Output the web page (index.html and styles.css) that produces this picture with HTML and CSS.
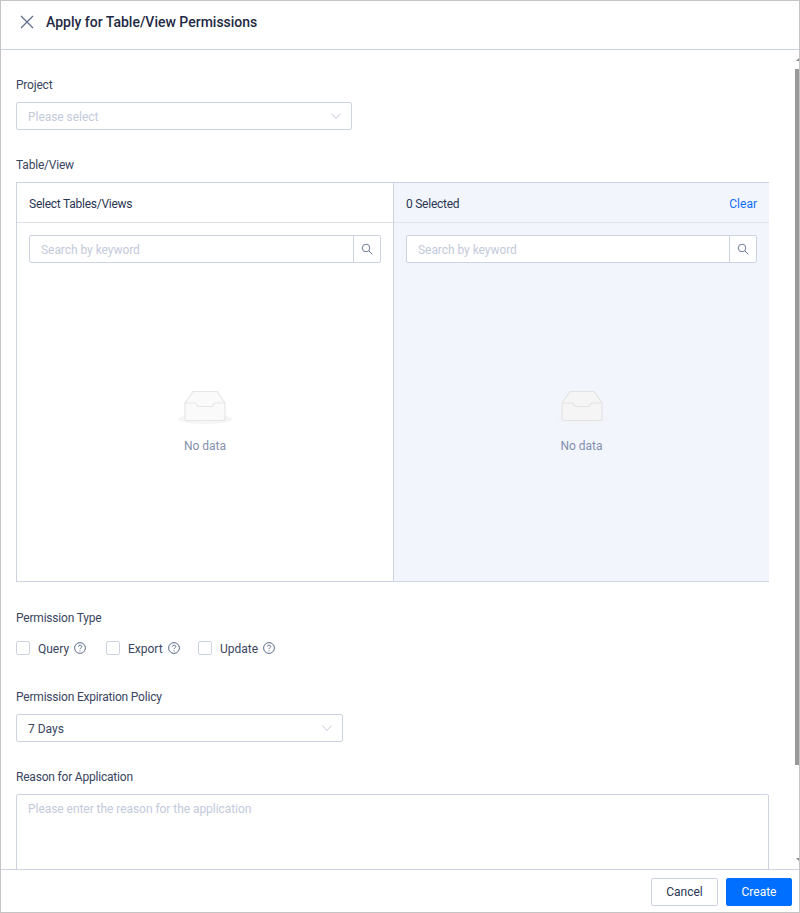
FILE: index.html
```html
<!DOCTYPE html>
<html lang="en">
<head>
<meta charset="utf-8">
<title>Apply for Table/View Permissions</title>
<link rel="stylesheet" href="styles.css">
</head>
<body>
<div class="window">
  <header class="header">
    <svg class="close" width="14" height="14" viewBox="0 0 14 14"><path d="M1 1l12 12M13 1L1 13" stroke="#5c6b8a" stroke-width="1.2" fill="none"/></svg>
    <h1 class="title">Apply for Table/View Permissions</h1>
  </header>
  <main class="body">
    <div class="scrollbar"><span class="arrow-up"></span><span class="thumb"></span><span class="arrow-down"></span></div>
    <section class="field project">
      <label class="label">Project</label>
      <div class="select select-project"><span class="placeholder">Please select</span>
        <svg class="chev" width="10" height="6" viewBox="0 0 10 6"><path d="M.5.5L5 5.5 9.5.5" stroke="#c3cadb" fill="none"/></svg></div>
    </section>
    <section class="field tableview">
      <label class="label">Table/View</label>
      <div class="transfer">
        <div class="pane pane-left">
          <div class="pane-head"><span>Select Tables/Views</span></div>
          <div class="search"><span class="search-input">Search by keyword</span><span class="search-btn"><svg width="12" height="12" viewBox="0 0 12 12"><circle cx="5" cy="5" r="3.8" stroke="#6f7c99" fill="none"/><path d="M7.8 7.8l3.4 3.4" stroke="#6f7c99" fill="none"/></svg></span></div>
          <div class="empty">
            <svg class="empty-icon" width="56" height="36" viewBox="0 0 56 36"><ellipse cx="28" cy="29" rx="27" ry="5" fill="#f5f5f5"/><path d="M8 13L16 1.500h24L48 13v15.500a2 2 0 0 1-2 2H10a2 2 0 0 1-2-2z" fill="#fafafa" stroke="#e6e6e6" stroke-width="1.200"/><path d="M8 13h10.500c1 0 1 3.500 3.500 3.500h12c2.500 0 2.500-3.500 3.500-3.500H48" fill="none" stroke="#e6e6e6" stroke-width="1.200"/></svg>
            <span class="empty-text">No data</span>
          </div>
        </div>
        <div class="pane pane-right">
          <div class="pane-head"><span>0 Selected</span><a class="clear">Clear</a></div>
          <div class="search"><span class="search-input">Search by keyword</span><span class="search-btn"><svg width="12" height="12" viewBox="0 0 12 12"><circle cx="5" cy="5" r="3.800" stroke="#6f7c99" fill="none"/><path d="M7.800 7.800l3.400 3.400" stroke="#6f7c99" fill="none"/></svg></span></div>
          <div class="empty">
            <svg class="empty-icon" width="56" height="36" viewBox="0 0 56 36"><ellipse cx="28" cy="29" rx="27" ry="5" fill="#f1f3f9"/><path d="M8 13L16 1.500h24L48 13v15.500a2 2 0 0 1-2 2H10a2 2 0 0 1-2-2z" fill="#f5f5f5" stroke="#e3e3e3" stroke-width="1.200"/><path d="M8 13h10.500c1 0 1 3.500 3.500 3.500h12c2.500 0 2.500-3.500 3.500-3.500H48" fill="none" stroke="#e3e3e3" stroke-width="1.200"/></svg>
            <span class="empty-text">No data</span>
          </div>
        </div>
      </div>
    </section>
    <section class="field permtype">
      <label class="label">Permission Type</label>
      <div class="checks">
        <span class="check"><i class="box"></i><span class="check-text">Query</span><svg class="help" width="12" height="12" viewBox="0 0 12 12"><circle cx="6" cy="6" r="5.400" stroke="#5c6b8a" fill="none"/><path d="M4.400 4.700c0-2.100 3.300-2.100 3.300-.1 0 1.300-1.700 1.200-1.700 2.500" stroke="#5c6b8a" fill="none"/><circle cx="6" cy="8.800" r=".6" fill="#5c6b8a"/></svg></span>
        <span class="check"><i class="box"></i><span class="check-text">Export</span><svg class="help" width="12" height="12" viewBox="0 0 12 12"><circle cx="6" cy="6" r="5.400" stroke="#5c6b8a" fill="none"/><path d="M4.400 4.700c0-2.100 3.300-2.100 3.300-.1 0 1.300-1.700 1.200-1.700 2.500" stroke="#5c6b8a" fill="none"/><circle cx="6" cy="8.800" r=".6" fill="#5c6b8a"/></svg></span>
        <span class="check"><i class="box"></i><span class="check-text">Update</span><svg class="help" width="12" height="12" viewBox="0 0 12 12"><circle cx="6" cy="6" r="5.400" stroke="#5c6b8a" fill="none"/><path d="M4.400 4.700c0-2.100 3.300-2.100 3.300-.1 0 1.300-1.700 1.200-1.700 2.500" stroke="#5c6b8a" fill="none"/><circle cx="6" cy="8.800" r=".6" fill="#5c6b8a"/></svg></span>
      </div>
    </section>
    <section class="field policy">
      <label class="label">Permission Expiration Policy</label>
      <div class="select select-policy"><span class="value">7 Days</span>
        <svg class="chev" width="10" height="6" viewBox="0 0 10 6"><path d="M.5.5L5 5.500 9.500.5" stroke="#c3cadb" fill="none"/></svg></div>
    </section>
    <section class="field reason">
      <label class="label">Reason for Application</label>
      <div class="textarea">Please enter the reason for the application</div>
    </section>
  </main>
  <footer class="footer">
    <button class="btn btn-cancel">Cancel</button>
    <button class="btn btn-create">Create</button>
  </footer>
</div>
</body>
</html>
```
FILE: styles.css
```css
* { box-sizing: border-box; }
html, body { margin: 0; height: 100%; }
body { font-family: Roboto, sans-serif; font-size: 12px; color: #2a3552; background: #fff; overflow: hidden; }
.window { height: 913px; border: 1px solid #c4c4c4; display: flex; flex-direction: column; }
.header { height: 49px; flex: none; display: flex; align-items: center; padding: 0 0 6px 19px; border-bottom: 1px solid #ced3e1; }
.close { margin-right: 12px; }
.title { margin: 0; font-size: 14px; font-weight: 500; color: #1f2a44; }
.body { position: relative; flex: 1; min-height: 0; overflow: hidden; padding: 26px 0 0 15px; }
.scrollbar { position: absolute; top: 0; bottom: 0; right: 0; width: 4px; }
.thumb { position: absolute; top: 19px; right: 0; width: 4px; height: 696px; background: #999; }
.arrow-up, .arrow-down { position: absolute; right: 0; width: 0; height: 0; border-left: 3px solid transparent; }
.arrow-up { top: 8px; border-bottom: 3px solid #888; }
.arrow-down { bottom: 8px; border-top: 3px solid #888; }
.label { display: block; line-height: 18px; height: 18px; color: #3a4560; letter-spacing: -0.2px; }
.field { width: 753px; }
.project { margin-bottom: 26px; }
.select { margin-top: 8px; height: 28px; border: 1px solid #ced3e1; border-radius: 2px; display: flex; align-items: center; justify-content: space-between; padding: 0 10px 0 11px; background: #fff; }
.select-project { width: 336px; }
.select-policy { width: 327px; }
.placeholder { color: #c3cadb; padding-top: 2px; letter-spacing: -0.05px; }
.value { color: #3a4560; padding-top: 2px; }
.tableview { margin-bottom: 27px; }
.transfer { margin-top: 8px; height: 400px; display: flex; border: 1px solid #ced3e1; border-right: none; }
.pane { display: flex; flex-direction: column; }
.pane-left { width: 376px; }
.pane-right { flex: 1; background: #f2f5fc; border-left: 1px solid #ced3e1; }
.pane-head { height: 40px; flex: none; display: flex; align-items: center; justify-content: space-between; padding: 2px 12px 0; border-bottom: 1px solid #dfe3ed; color: #2a3552; letter-spacing: -0.25px; }
.clear { color: #0d6efd; letter-spacing: 0; }
.search { margin: 12px 12px 0; height: 28px; display: flex; background: #fff; border: 1px solid #ced3e1; border-radius: 2px; }
.search-input { flex: 1; padding-left: 11px; line-height: 28px; color: #c3cadb; letter-spacing: -0.05px; }
.search-btn { width: 27px; border-left: 1px solid #ced3e1; display: flex; align-items: center; justify-content: center; }
.empty { flex: 1; display: flex; flex-direction: column; align-items: center; padding-top: 127px; }
.empty-icon { display: block; }
.empty-text { margin-top: 13px; color: #8390ad; }
.permtype { margin-bottom: 31px; }
.checks { margin-top: 12px; display: grid; grid-template-columns: 90px 92px auto; }
.check { display: flex; align-items: center; height: 18px; color: #3a4560; }
.check-text { padding-top: 1px; }
.box { width: 14px; height: 14px; border: 1px solid #ced3e1; border-radius: 2px; background: #fff; margin-right: 8px; }
.help { margin-left: 5px; }
.policy { margin-bottom: 26px; }
.textarea { margin-top: 8px; height: 120px; padding: 7px 11px; border: 1px solid #ced3e1; border-radius: 2px; color: #c3cadb; letter-spacing: -0.05px; }
.footer { height: 43px; flex: none; border-top: 1px solid #ced3e1; display: flex; justify-content: flex-end; align-items: center; gap: 8px; padding: 2px 7px 0 0; background: #fff; position: relative; }
.btn { height: 28px; font: inherit; border-radius: 2px; border: 1px solid #ced3e1; }
.btn-cancel { width: 67px; background: #fff; color: #2a3552; }
.btn-create { width: 66px; background: #006eff; border-color: #006eff; color: #fff; }
```
